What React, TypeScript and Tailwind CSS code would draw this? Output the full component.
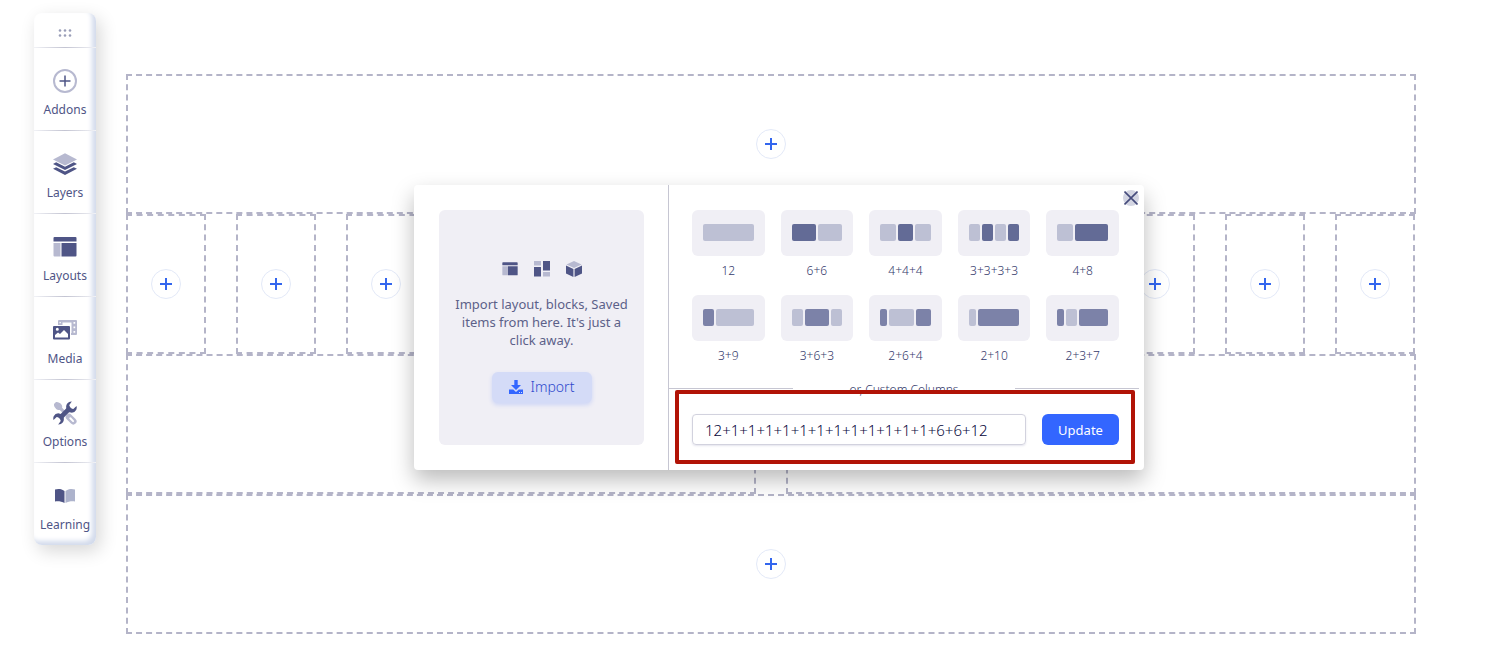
import React from "react";

type Tone = "light" | "dark" | "mid";
type Preset = { label: string; parts: [number, Tone][] };

const toneClass: Record<Tone, string> = {
  light: "bg-[#bdc0d4]",
  dark: "bg-[#636b96]",
  mid: "bg-[#7c82a8]",
};

const presets: Preset[] = [
  { label: "12", parts: [[51, "light"]] },
  { label: "6+6", parts: [[24, "dark"], [24, "light"]] },
  { label: "4+4+4", parts: [[16, "light"], [16, "dark"], [16, "light"]] },
  { label: "3+3+3+3", parts: [[11, "light"], [11, "dark"], [11, "light"], [11, "dark"]] },
  { label: "4+8", parts: [[15, "light"], [33, "dark"]] },
  { label: "3+9", parts: [[11, "mid"], [37, "light"]] },
  { label: "3+6+3", parts: [[11, "light"], [24, "mid"], [11, "light"]] },
  { label: "2+6+4", parts: [[7, "mid"], [24, "light"], [15, "mid"]] },
  { label: "2+10", parts: [[7, "light"], [42, "mid"]] },
  { label: "2+3+7", parts: [[7, "mid"], [10, "light"], [29, "mid"]] },
];

const rows = [1, 12, 2, 1];

function AddonsIcon() {
  return (
    <svg width="24" height="24" viewBox="0 0 24 24" fill="none">
      <circle cx="12" cy="12" r="11" stroke="#b7b9d0" strokeWidth="2" />
      <path d="M12 6.500v11M6.500 12h11" stroke="#4f5586" strokeWidth="1.500" />
    </svg>
  );
}

function LayersIcon() {
  return (
    <svg width="24" height="24" viewBox="0 0 24 24">
      <path d="M12 1.300L24 7.500 12 13.500 0 7.500z" fill="#b7b9d0" />
      <path d="M0 12l3.200-1.700 8.800 4.500 8.800-4.500 3.200 1.700-12 6z" fill="#4f5586" />
      <path d="M0 16.700l3.200-1.500 8.800 4.300 8.800-4.300 3.200 1.500-12 6.300z" fill="#4f5586" />
    </svg>
  );
}

function LayoutIcon({ size }: { size: number }) {
  return (
    <svg width={size} height={size} viewBox="0 0 24 24">
      <path d="M1.500 2h21a1 1 0 0 1 1 1V6.500H.500V3a1 1 0 0 1 1-1z" fill="#4f5586" />
      <path d="M.500 8H7.500v13.500H1.500a1 1 0 0 1-1-1z" fill="#b7b9d0" />
      <path d="M8.500 8h15v12.500a1 1 0 0 1-1 1h-14z" fill="#4f5586" />
    </svg>
  );
}

function MediaIcon() {
  return (
    <svg width="24" height="24" viewBox="0 0 24 24">
      <path
        fillRule="evenodd"
        d="M6 2h17a1 1 0 0 1 1 1v13a1 1 0 0 1-1 1h-5v-2h.5V4.500H9.500V7H5V3a1 1 0 0 1 1-1zM6.500 4v1.300h1.300V4zM20.500 4v1.700h1.700V4zM20.500 8.500v1.700h1.700V8.500zM20.500 13v1.700h1.700V13z"
        fill="#b7b9d0"
      />
      <path
        fillRule="evenodd"
        d="M1 8h15a1 1 0 0 1 1 1v11.500a1 1 0 0 1-1 1H1a1 1 0 0 1-1-1V9a1 1 0 0 1 1-1zM2 19.500h13V16l-4-4-4 4-2-1.500-3 2.500zM4.300 9.800a1.500 1.500 0 1 0 0 3 1.500 1.500 0 0 0 0-3z"
        fill="#4f5586"
      />
    </svg>
  );
}

function OptionsIcon() {
  return (
    <svg width="24" height="24" viewBox="0 0 24 24" fill="none">
      <path d="M1 3L3 1c2-.300 4 .800 5.200 2.200 1.300 1.300 1 2.500.900 3.600L14 12l-2 2-5.200-5.100c-1.200.100-2.400.200-3.600-1C1.800 6.500.700 5 1 3z" fill="#b7b9d0" />
      <path d="M16 16l4.300 4.300" stroke="#b7b9d0" strokeWidth="6.500" strokeLinecap="round" />
      <path d="M17.300 17.300l2.800 2.800" stroke="#ffffff" strokeWidth="2" strokeLinecap="round" />
      <path d="M6.500 17.500l11-11" stroke="#4f5586" strokeWidth="4.600" />
      <path
        d="M18.800.600a5.300 5.300 0 0 0-5.400 6.900 5.300 5.300 0 0 0 9.900 1.200 5.500 5.500 0 0 0 .2-3.700L20.300 8l-3.400-.700-.600-3.200z"
        fill="#4f5586"
      />
      <path
        d="M5.200 23.400a5.300 5.300 0 0 0 5.400-6.900 5.300 5.300 0 0 0-9.900-1.200 5.500 5.500 0 0 0-.2 3.700L3.700 16l3.400.700.600 3.200z"
        fill="#4f5586"
      />
    </svg>
  );
}

function LearningIcon() {
  return (
    <svg width="24" height="24" viewBox="0 0 24 24">
      <path d="M2 5.500C5 4.500 9 4.800 11.500 7v12C9 17.500 5 17 2 17.500z" fill="#4f5586" />
      <path d="M22 5.500C19 4.500 15 4.800 12.500 7v12c2.500-1.500 6.500-2 9.500-1.500z" fill="#adb3cc" />
    </svg>
  );
}

function BlocksIcon() {
  return (
    <svg width="16" height="16" viewBox="0 0 16 16">
      <path d="M0 0h7v4.500H0zM9 11h7v4.500H9z" fill="#b7b9d0" />
      <path d="M0 6h7v9.500H0zM9 0h7v9.500H9z" fill="#4f5586" />
    </svg>
  );
}

function CubeIcon() {
  return (
    <svg width="16" height="16" viewBox="0 0 16 16">
      <path d="M8 0l7.500 3.500L8 7 .500 3.500z" fill="#b7b9d0" />
      <path d="M0 4.600L7.400 8v8L0 12.500zM16 4.600L8.600 8v8l7.400-3.500z" fill="#4f5586" />
    </svg>
  );
}

function DownloadIcon() {
  return (
    <svg width="14" height="14" viewBox="0 0 14 14">
      <path d="M5.300 0h3.400v5H12L7 10 2 5h3.300z" fill="#3366ff" />
      <path
        fillRule="evenodd"
        d="M0 9.500h4.300L7 12l2.700-2.500H14V14H0zM10 12v.900h1V12zM12 12v.900h1V12z"
        fill="#3366ff"
      />
    </svg>
  );
}

const tools = [
  { label: "Addons", icon: <AddonsIcon /> },
  { label: "Layers", icon: <LayersIcon /> },
  { label: "Layouts", icon: <LayoutIcon size={24} /> },
  { label: "Media", icon: <MediaIcon /> },
  { label: "Options", icon: <OptionsIcon /> },
  { label: "Learning", icon: <LearningIcon /> },
];

function Sidebar() {
  return (
    <nav
      aria-label="Builder tools"
      className="flex w-[62px] shrink-0 flex-col self-start rounded-lg bg-white shadow-[inset_-4px_-4px_5px_#d3dbec,4px_6px_18px_rgba(0,0,0,0.16)]"
    >
      <button type="button" aria-label="Move toolbar" className="flex h-[34px] items-center justify-center pt-[6px]">
        <svg width="14" height="8" viewBox="0 0 14 8" fill="#9a9eb8">
          <circle cx="2" cy="1.500" r="1.300" />
          <circle cx="7" cy="1.500" r="1.300" />
          <circle cx="12" cy="1.500" r="1.300" />
          <circle cx="2" cy="6.500" r="1.300" />
          <circle cx="7" cy="6.500" r="1.300" />
          <circle cx="12" cy="6.500" r="1.300" />
        </svg>
      </button>
      {tools.map((tool) => (
        <React.Fragment key={tool.label}>
          <div className="h-px bg-linear-to-r from-[#f1f2f6] via-[#c3c4d2] to-[#f1f2f6]" />
          <button type="button" className="flex h-[82px] flex-col items-center gap-2 pt-[21px]">
            {tool.icon}
            <span className="text-xs leading-[18px] text-[#4f5586]">{tool.label}</span>
          </button>
        </React.Fragment>
      ))}
    </nav>
  );
}

function Canvas() {
  return (
    <main className="mt-[61px] flex min-w-0 flex-1 flex-col">
      {rows.map((count, row) => (
        <section key={row} className={count > 2 ? "flex gap-[30px] pr-px" : "flex gap-[30px]"}>
          {Array.from({ length: count }, (_, col) => (
            <div
              key={col}
              className="flex h-[140px] min-w-0 flex-1 items-center justify-center border-2 border-dashed border-[#b4b4c8]"
            >
              <button
                type="button"
                aria-label="Add addon"
                className="flex size-[30px] shrink-0 items-center justify-center rounded-full border border-[#e3e9f8] bg-white"
              >
                <svg width="12" height="12" viewBox="0 0 12 12">
                  <path d="M6 0v12M0 6h12" stroke="#3366ee" strokeWidth="2" />
                </svg>
              </button>
            </div>
          ))}
        </section>
      ))}
    </main>
  );
}

function PresetButton({ preset }: { preset: Preset }) {
  return (
    <button type="button" className="flex flex-col items-stretch">
      <span className="flex h-[46px] items-center gap-[2px] rounded-md bg-[#f0eff5] px-[11px] pb-px">
        {preset.parts.map(([size, tone], i) => (
          <span key={i} className={`h-[17px] rounded-xs ${toneClass[tone]}`} style={{ flex: `${size} 1 0%` }} />
        ))}
      </span>
      <span className="mt-[5px] text-center text-xs leading-5 font-light text-[#34396b]">{preset.label}</span>
    </button>
  );
}

function ColumnsDialog() {
  return (
    <div
      role="dialog"
      aria-label="Add new row"
      className="absolute top-[185px] left-[414px] flex h-[285px] w-[730px] rounded bg-white shadow-[0_10px_22px_rgba(0,0,0,0.27)]"
    >
      <div className="w-[255px] border-r border-[#c6c6d2] py-[25px] pr-6 pl-[25px]">
        <div className="flex h-[235px] flex-col items-center justify-center rounded-md bg-[#f0eff5] px-3 pt-2">
          <div className="flex gap-4">
            <LayoutIcon size={16} />
            <BlocksIcon />
            <CubeIcon />
          </div>
          <p className="mt-[18px] text-center text-[13px] leading-[18px] text-[#5c6189]">
            Import layout, blocks, Saved items from here. It's just a click away.
          </p>
          <button
            type="button"
            className="mt-[23px] flex h-[31px] w-[100px] items-center justify-center gap-2 rounded-md bg-[#d4dbf7] text-sm font-light text-[#2c48cc] shadow-[0_2px_4px_rgba(51,102,255,0.18)]"
          >
            <DownloadIcon />
            Import
          </button>
        </div>
      </div>
      <div className="flex flex-1 flex-col pt-[25px]">
        <div className="grid grid-cols-5 gap-x-4 gap-y-[14px] pr-[25px] pl-[23px]">
          {presets.map((preset) => (
            <PresetButton key={preset.label} preset={preset} />
          ))}
        </div>
        <div className="mt-[10px] flex items-center pr-[5px]">
          <span className="h-px w-[124px] bg-[#c6c6d2]" />
          <span className="flex-1 pt-1 text-center text-xs leading-5 font-light text-[#34396b]">or, Custom Columns</span>
          <span className="h-px w-[124px] bg-[#c6c6d2]" />
        </div>
        <form className="mt-[14px] flex gap-4 pr-[25px] pl-[23px]" onSubmit={(e) => e.preventDefault()}>
          <input
            aria-label="Custom columns"
            defaultValue="12+1+1+1+1+1+1+1+1+1+1+1+1+6+6+12"
            className="h-[31px] min-w-0 flex-1 rounded border border-[#d2d2de] px-3 text-[15px] font-light text-[#05053a] shadow-[0_1px_2px_rgba(80,80,140,0.15)] outline-none"
          />
          <button type="submit" className="h-[31px] w-[77px] rounded-md bg-[#3366ff] pt-[2px] text-[13px] text-white">
            Update
          </button>
        </form>
      </div>
      <button
        type="button"
        aria-label="Close"
        className="absolute top-[5px] right-[5px] flex size-4 items-center justify-center rounded-full bg-[#d3d5e2]"
      >
        <svg width="14" height="14" viewBox="0 0 14 14" className="shrink-0">
          <path d="M.500.500l13 13M13.500.500l-13 13" stroke="#454b7c" strokeWidth="1.600" />
        </svg>
      </button>
      <div className="pointer-events-none absolute top-[205px] right-[9px] h-[74px] w-[460px] rounded-xs border-4 border-[#b11306]" />
    </div>
  );
}

export default function App() {
  return (
    <div className="relative flex min-h-screen gap-[30px] bg-white pt-[13px] pr-[86px] pb-6 pl-[34px] font-['Noto_Sans','Open_Sans',sans-serif]">
      <Sidebar />
      <Canvas />
      <ColumnsDialog />
    </div>
  );
}
